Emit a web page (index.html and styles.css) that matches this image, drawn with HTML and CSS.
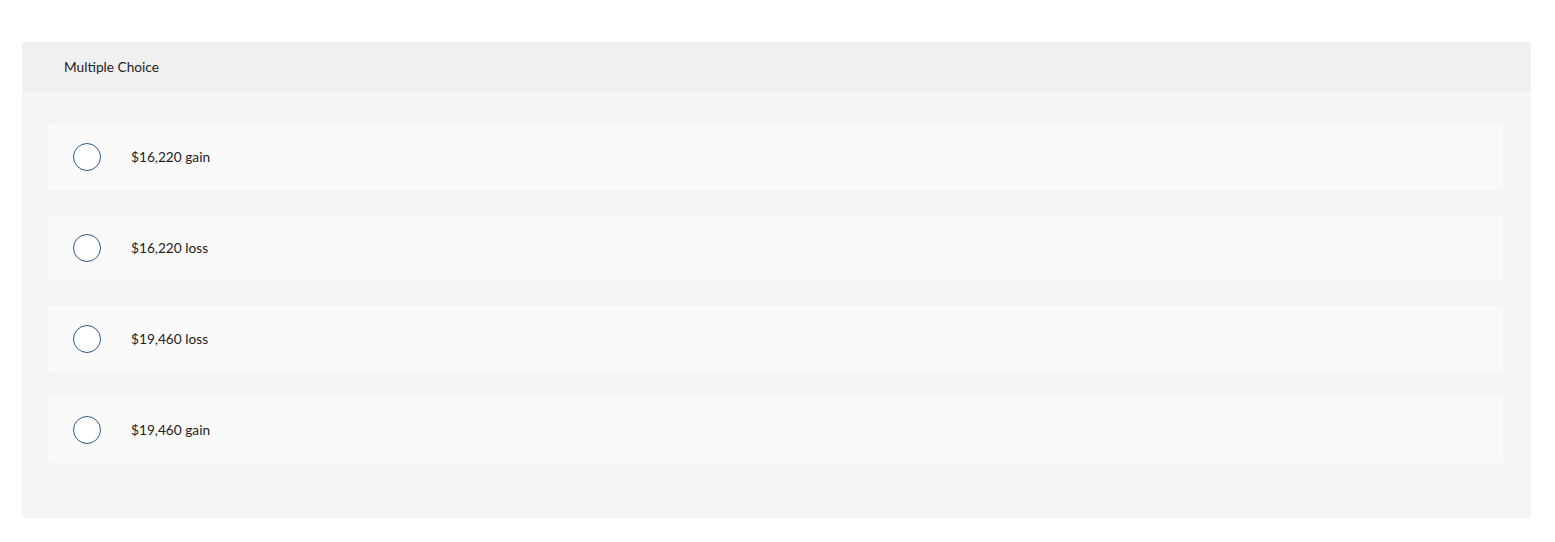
FILE: index.html
```html
<!DOCTYPE html>
<html>
<head>
<meta charset="utf-8">
<link rel="stylesheet" href="styles.css">
</head>
<body>
<div class="card">
  <div class="card-header">Multiple Choice</div>
  <div class="card-body">
    <div class="option"><span class="radio"></span><span class="label">$16,220 gain</span></div>
    <div class="option"><span class="radio"></span><span class="label">$16,220 loss</span></div>
    <div class="option"><span class="radio"></span><span class="label">$19,460 loss</span></div>
    <div class="option"><span class="radio"></span><span class="label">$19,460 gain</span></div>
  </div>
</div>
</body>
</html>
```
FILE: styles.css
```css
html, body {
  margin: 0;
  padding: 0;
  background: #ffffff;
}
body {
  font-family: Lato, "Liberation Sans", sans-serif;
  color: #222222;
  padding: 42px 24px 0 22px;
}
.card {
  background: #f5f5f5;
  border-radius: 3px;
  overflow: hidden;
}
.card-header {
  background: #f0f0f0;
  height: 50px;
  box-sizing: border-box;
  display: flex;
  align-items: center;
  padding: 0 0 2px 42px;
  font-size: 13.7px;
  color: #222;
}
.card-body {
  display: flex;
  flex-direction: column;
  gap: 25px;
  padding: 32px 28px 55px 26px;
}
.option {
  background: #fafafa;
  border-radius: 3px;
  height: 66px;
  display: flex;
  align-items: center;
  padding-left: 25px;
}
.radio {
  width: 26px;
  height: 26px;
  border: 1.4px solid #2d5a8a;
  border-radius: 50%;
  background: #ffffff;
  flex: none;
}
.label {
  margin-left: 30px;
  margin-bottom: 2px;
  font-size: 13.7px;
  color: #222;
}
```
